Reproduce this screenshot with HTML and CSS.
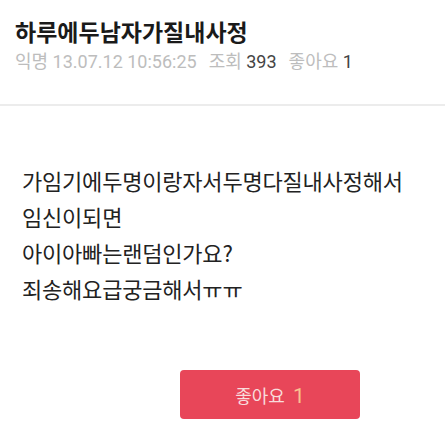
FILE: index.html
```html
<!DOCTYPE html>
<html lang="ko">
<head>
<meta charset="utf-8">
<link rel="stylesheet" href="styles.css">
</head>
<body>
<div class="post">
  <header class="head">
    <h1 class="title">하루에두남자가질내사정</h1>
    <div class="meta">
      <span class="lbl">익명 13.07.12 10:56:25</span>
      <span class="lbl">조회 <b class="val">393</b></span>
      <span class="lbl">좋아요 <b class="val">1</b></span>
    </div>
  </header>
  <div class="body">
    <p class="line">가임기에두명이랑자서두명다질내사정해서</p>
    <p class="line">임신이되면</p>
    <p class="line">아이아빠는랜덤인가요?</p>
    <p class="line">죄송해요급궁금해서ㅠㅠ</p>
  </div>
  <div class="actions">
    <button class="like">좋아요 <span class="cnt">1</span></button>
  </div>
</div>
</body>
</html>
```

FILE: styles.css
```css
html, body {
  margin: 0;
  padding: 0;
  background: #fff;
}
body {
  font-family: "Roboto", "Noto Sans CJK KR", sans-serif;
  color: #222;
}
.head {
  padding: 16px 15px 0;
  height: 88px;
  border-bottom: 2px solid #ececec;
}
.title {
  margin: 0;
  font-family: "Noto Sans CJK KR", sans-serif;
  font-size: 23px;
  font-weight: 700;
  line-height: 31px;
  color: #1a1a1a;
  letter-spacing: 0;
}
.meta {
  margin-top: 3px;
  display: flex;
  gap: 12px;
  font-size: 18px;
  line-height: 24px;
  color: #bdbdbd;
}
.val {
  font-weight: 400;
  color: #444;
}
.body {
  padding: 56px 22px 0;
}
.line {
  margin: 0;
  font-family: "Noto Sans CJK KR", sans-serif;
  font-size: 22px;
  line-height: 36px;
  letter-spacing: -0.2px;
  color: #222;
}
.actions {
  display: flex;
  padding: 64px 0 0 180px;
}
.like {
  width: 180px;
  height: 49px;
  border: none;
  border-radius: 4px;
  background: #e84659;
  color: #f8dcdc;
  font-family: "Noto Sans CJK KR", sans-serif;
  font-size: 18px;
  padding: 0;
  cursor: pointer;
}
.cnt {
  color: #f8c38f;
  font-family: "Roboto", sans-serif;
  font-size: 21px;
  margin-left: 3px;
}
```
